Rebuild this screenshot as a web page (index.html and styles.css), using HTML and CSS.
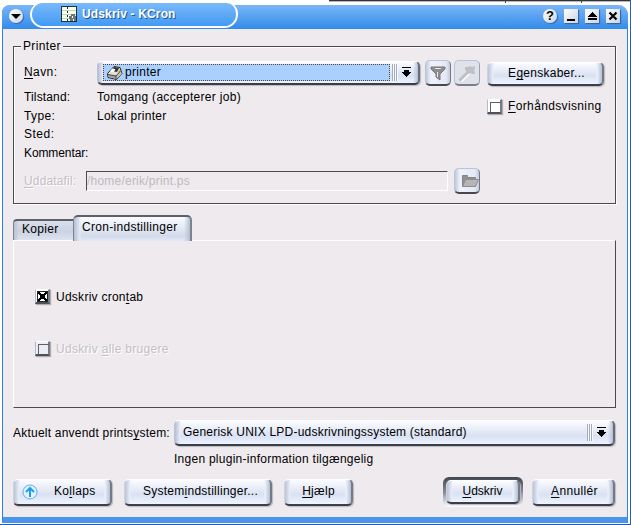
FILE: index.html
```html
<!DOCTYPE html>
<html lang="da">
<head>
<meta charset="utf-8">
<title>Udskriv - KCron</title>
<link rel="stylesheet" href="styles.css">
</head>
<body>
<div class="desktop">
  <div class="backdrop"></div>
  <div class="window">
    <header class="titlebar">
      <span class="round menu-btn"><svg width="14" height="14"><path d="M2.5 5h9v1h-1v1h-1v1h-1v1h-1v1h-1V9h-1V8h-1V7h-1V6h-1z"/></svg></span>
      <div class="caption">
        <svg class="app-icon" width="16" height="16" shape-rendering="crispEdges"><path fill="#203038" d="M0 0h16v16H0z"/><path fill="#f5ffe8" d="M1 1h14v14H1z"/><path stroke="#c4d4c4" d="M1 4.5h14M1 8.5h14M1 12.5h8"/><path stroke="#203038" stroke-dasharray="2 2" d="M6.500 1v14"/><path fill="#68737a" d="M8 10h2V8h4v2h1v5h-2v-2h-1v2H9v-2H8z"/><path fill="#fff" d="M11 10h1v2h-1z"/></svg>
        <span class="title">Udskriv - KCron</span>
      </div>
      <div class="controls">
        <span class="round help">?</span>
        <span class="sq"><svg width="14" height="14"><path d="M3 10h8v2H3z"/></svg></span>
        <span class="sq"><svg width="14" height="14" shape-rendering="crispEdges"><path d="M7 3h1v1h1v1h1v1h1v1h1v1H3V7h1V6h1V5h1V4h1zM3 9h9v2H3z"/></svg></span>
        <span class="sq"><svg width="14" height="14"><path stroke="#000" stroke-width="2.200" d="M3.500 3.500l7 7m0-7l-7 7"/></svg></span>
      </div>
    </header>
    <main class="content">
      <section class="group">
        <h2 class="legend">Printer</h2>
        <div class="row row-name">
          <label class="t-navn"><u>N</u>avn:</label>
          <div class="combo combo-printer">
            <div class="selected">
              <svg width="18" height="16"><path fill="#e2e0d8" stroke="#222" d="M1.500 8.500L8 1.500l6 1 2 6-5.500 6L2 12.500z"/><path fill="#a4a29e" d="M2 9.500l8 1.500v3l-7.500-2z"/><path fill="#c4c2b8" d="M10 11l5-5 .6 3-5.100 5z"/><path fill="#333" d="M8 2l5 1-2 4-5-1z"/><path fill="#fff" d="M6 3.500l3.500.7-2 3L4 6.500z"/><path fill="#e0c828" d="M12 6l2-1.500v2L12.500 8z"/><path stroke="#444" fill="none" d="M2 9.500l8 1.500 4.500-5M10 11v3"/></svg>
              <span class="t-printer">printer</span>
            </div>
            <span class="grip"></span>
            <svg class="arrow" width="11" height="11" shape-rendering="crispEdges"><path d="M1 0h9v1H1zM3 3h5v2h2v1H9v1H8v1H7v1H6v1H5V9H4V8H3V7H2V6H1V5h2z"/></svg>
          </div>
          <span class="tool"><svg width="18" height="18"><path fill="#8d8d8d" stroke="#777" d="M2 3h14v2l-5 5v6l-4-3v-3L2 5z"/><path fill="#e8e8e8" d="M5 4h8l-2 1H7zM8 8h1v5H8z"/></svg></span>
          <span class="tool flat"><svg width="20" height="20"><path stroke="#fff" stroke-width="3" d="M4 18L13 9"/><path stroke="#c0c0c4" stroke-width="3" d="M2.500 17.500L12 8"/><path fill="#c0c0c4" d="M8 4l3 0 2-1 2 1 3-1v3l-1 1 1 4-3 0-1-1-2 1-4-4z"/></svg></span>
        </div>
        <div class="side">
          <button class="btn egen"><span class="t-egen">E<u>g</u>enskaber...</span></button>
          <label class="check"><i class="box"></i><span class="t-forh"><u>F</u>orhåndsvisning</span></label>
        </div>
        <div class="row info r1"><span class="t-tilstand">Tilstand:</span><span class="t-tomgang">Tomgang (accepterer job)</span></div>
        <div class="row info r2"><span class="t-type">Type:</span><span class="t-lokal">Lokal printer</span></div>
        <div class="row info r3"><span class="t-sted">Sted:</span></div>
        <div class="row info r4"><span class="t-komm">Kommentar:</span></div>
        <div class="row row-file">
          <label class="disabled t-uddata"><u>U</u>ddatafil:</label>
          <div class="field"><span class="t-path">/home/erik/print.ps</span></div>
          <span class="tool folder"><svg width="18" height="15"><path fill="#929292" stroke="#858585" d="M1.500 13.500v-11h5v2h8v9z"/><path fill="#b5b5b8" stroke="#8d8d8d" d="M1.500 13.500l3-7h13l-3 7z"/></svg></span>
        </div>
      </section>
      <nav class="tabs">
        <div class="tab"><span class="t-kopier">Kopier</span></div>
        <div class="tab active"><span class="t-cron">Cron-indstillinger</span></div>
      </nav>
      <section class="panel">
        <label class="check"><i class="box"><svg width="11" height="11" shape-rendering="crispEdges"><path fill="#222" d="M0 0h11v11H0z"/><path fill="#fff" d="M1 1h9v9H1z"/><path d="M1 1h2v1h1v1h3V2h1V1h2v2H9v1H8v3h1v1h1v2H8V9H7V8H4v1H3v1H1V8h1V7h1V4H2V3H1z"/></svg></i><span class="t-crontab">Udskriv cron<u>t</u>ab</span></label>
        <label class="check"><i class="box dim"></i><span class="disabled t-alle">Udskriv <u>a</u>lle brugere</span></label>
      </section>
      <section class="system">
        <label class="t-aktuelt">Aktuelt anvendt prints<u>y</u>stem:</label>
        <div class="combo combo-system">
          <span class="t-generisk">Generisk UNIX LPD-udskrivningssystem (standard)</span>
          <span class="grip"></span>
          <svg class="arrow" width="11" height="11" shape-rendering="crispEdges"><path d="M1 0h9v1H1zM3 3h5v2h2v1H9v1H8v1H7v1H6v1H5V9H4V8H3V7H2V6H1V5h2z"/></svg>
        </div>
      </section>
      <p class="plugin"><span class="t-ingen">Ingen plugin-information tilgængelig</span></p>
      <footer class="actions">
        <button class="btn kollaps"><svg width="16" height="16"><circle cx="8" cy="8" r="7" fill="#e2f3ff" stroke="#66aee8"/><path fill="none" stroke="#1e9cf0" stroke-width="2" d="M8 13V4M4 8l4-4 4 4"/></svg><span class="t-kollaps">Ko<u>l</u>laps</span></button>
        <button class="btn sysset"><span class="t-sysset">System<u>i</u>ndstillinger...</span></button>
        <button class="btn help-btn"><span class="t-help"><u>H</u>jælp</span></button>
        <div class="default"><button class="btn"><span class="t-udskriv"><u>U</u>dskriv</span></button></div>
        <button class="btn cancel"><span class="t-cancel"><u>A</u>nnullér</span></button>
      </footer>
    </main>
  </div>
</div>
</body>
</html>
```
FILE: styles.css
```css
* { box-sizing: border-box; }
body { margin: 0; font: 12px/16px "Liberation Sans", Arial, sans-serif; color: #000; background: #fff; }
span, label { white-space: nowrap; }
svg { display: block; flex: none; }
u { text-decoration: underline; text-underline-offset: 2px; text-decoration-thickness: 1px; text-decoration-skip-ink: none; }
.desktop { position: relative; width: 631px; height: 525px; overflow: hidden; border-right: 1px solid #1f62ae; border-bottom: 1px solid #1f5fae; }
.backdrop { height: 5px; margin-left: 329px; background: linear-gradient(#444, #444) 176px 0 / 1px 3px no-repeat, linear-gradient(#444, #444) 252px 0 / 1px 3px no-repeat, linear-gradient(#333 1px, #b8b4b8 1px, #b8b4b8 2px, #fff 2px); }
.window { width: 626px; height: 518px; margin-left: 2px; background: #eeeaee; border: solid #2f7fdc; border-width: 0 1px 6px; border-bottom-color: #4a94ee; border-radius: 8px 10px 0 0; }
.titlebar { display: flex; align-items: flex-start; height: 24px; margin: 0 -1px; padding-left: 7px; border-radius: 8px 10px 0 0; background: linear-gradient(#7ab6f8, #338bea); }
.round, .sq { display: flex; align-items: center; justify-content: center; width: 14px; height: 14px; background: linear-gradient(135deg, #fff, #cbd2e2); box-shadow: 1px 1px 1px #3568a8; }
.round { border-radius: 50%; }
.menu-btn { margin-top: 4px; }
.caption { display: flex; align-items: center; width: 208px; height: 26px; margin: -3px 0 0 7px; padding-left: 29px; border: 2px solid #fff; border-top-width: 1px; border-radius: 13px 12px 14px 14px; background: linear-gradient(#7ab9fa, #429af4); color: #fff; }
.title { margin: -2px 0 0 5px; font: bold 12px/16px "Liberation Sans", sans-serif; text-shadow: 1px 1px #24558c; letter-spacing: .15px; }
.app-icon { margin-top: -2px; }
.controls { display: flex; gap: 7px; margin: 4px 0 0 305px; }
.help { font: bold 13px/14px "Liberation Sans", sans-serif; }
.content { padding: 17px 11px 0 10px; }
.group { position: relative; height: 158px; border: 1px solid #4c4a4e; box-shadow: 1px 1px #fff, inset 1px 1px #fff; padding: 0 10px; }
.legend { width: max-content; margin: -9px 0 0 -3px; padding: 0 2px; background: #eeeaee; font: 12px/16px "Liberation Sans", sans-serif; letter-spacing: .35px; }
.row { display: flex; align-items: center; }
.row-name { height: 25px; margin-top: 7px; }
.row-name label { width: 73px; margin-top: -3px; }
.combo { display: flex; align-items: center; border: 1px solid #bac4d8; border-top-color: #fff; border-bottom: 2px solid #3a3e46; border-right: 2px solid #656b78; border-radius: 5px; background: linear-gradient(90deg, #b6bfd1, #e8ecf8 5px, transparent 6px, transparent calc(100% - 5px), #b7c2d6), linear-gradient(#fbfcff, #d9e1f2 65%, #eef2ff); box-shadow: 1px 1px 1px #bbb8be; }
.combo-printer { width: 323px; height: 24px; margin-top: -1px; padding-left: 5px; }
.selected { display: flex; align-items: center; width: 287px; height: 17px; border: 1px dotted #58472c; background: #aad0ff; padding-left: 2px; }
.selected span { margin: -1px 0 0 1px; }
.grip { width: 6px; height: 17px; margin-left: 2px; background: repeating-linear-gradient(90deg, #a5adbd 0 1px, #f7f9ff 1px 2px); }
.arrow { margin-left: 3px; }
.tool { display: flex; align-items: center; justify-content: center; flex: none; width: 26px; height: 26px; margin-left: 5px; border: 1px solid #bbc4d5; border-bottom: 2px solid #45484f; border-right-color: #737987; border-radius: 5px; background: linear-gradient(90deg, #c0c9da, #eef2fc 5px, #e4e9f6 20px, #c2cadb); }
.tool.flat { margin-left: 3px; border-right-color: #9ba1ae; border-bottom-color: #777d89; background: #dfe2eb; }
.row-name .tool { margin-top: -1px; }
.side { position: absolute; left: 473px; top: 15px; }
.btn { display: flex; align-items: center; justify-content: center; margin: 0; padding: 0; font: inherit; border: 1px solid #cbd2e0; border-top-color: #fff; border-right: 2px solid #737986; border-bottom: 2px solid #3b3f47; border-radius: 5px; background: linear-gradient(90deg, #bac4d6, #e9eefa 5px, transparent 6px, transparent calc(100% - 6px), #edf1fb calc(100% - 5px), #b3bfd3), linear-gradient(#fbfcff, #d9e1f2 60%, #f0f4ff); box-shadow: 1px 1px 1px #bbb8be; }
.btn span { margin-top: -2px; }
.egen { width: 117px; height: 24px; padding-left: 3px; }
.check { display: flex; align-items: center; gap: 6px; }
.side .check { margin-top: 12px; }
.box { display: block; width: 15px; height: 15px; padding: 1px; border: solid #858990; border-width: 1px 2px 2px 1px; border-color: #fff #777b84 #4e535b #b6bac4; background: #fff; box-shadow: 1px 1px 1px #b0acb2; }
.box:empty::before { content: ""; display: block; width: 10px; height: 9px; margin: 1px; border: solid #5f6066; border-width: 1px 0 0 1px; }
.dim { background: #eceef5; }
.info { height: 19px; }
.r1 { margin-top: 1px; }
.r3 { height: 18px; }
.info span:first-child { width: 73px; }
.row-file { height: 26px; margin-top: 6px; }
.disabled { color: #c4c0c6; text-shadow: 1px 1px #fff; }
.row-file label { width: 62px; }
.field { display: flex; align-items: center; width: 362px; height: 20px; border: 1px solid; border-color: #4c4a4e #fff #fff #4c4a4e; color: #bebac0; }
.folder { margin-left: 6px; padding-left: 6px; }
.tabs { display: flex; align-items: flex-end; height: 25px; margin-top: 11px; }
.tab { position: relative; display: flex; align-items: center; width: 61px; height: 21px; padding: 0 0 4px 8px; border: 1px solid #7c838f; border-width: 2px 0 0 1px; border-top-color: #5c6069; border-radius: 4px 0 0; background: linear-gradient(90deg, #bac4d2, transparent 5px), linear-gradient(#d9deea, #cbd3e1 55%, #dce3f0); }
.tab.active { width: 119px; height: 26px; margin: 0 0 -1px -1px; border-width: 2px 2px 0 1px; border-radius: 5px 5px 0 0; background: linear-gradient(90deg, #b4c0d2, #e5eaf7 6px, transparent 7px, transparent calc(100% - 6px), #b4c0d2), linear-gradient(#fafbff, #d3dbea 80%, #e2e9f7); }
.panel { height: 168px; padding: 48px 0 0 21px; border: 1px solid; border-color: #fff #4c4a4e #4c4a4e #fff; }
.panel .check { height: 15px; }
.panel .check + .check { margin-top: 37px; }
.system { display: flex; align-items: center; height: 26px; margin-top: 12px; }
.system label { width: 161px; }
.combo-system { width: 441px; height: 26px; padding-left: 8px; }
.combo-system .t-generisk { width: 402px; margin-top: -2px; }
.plugin { margin: 5px 0 0 161px; height: 16px; }
.actions { display: flex; align-items: center; height: 30px; margin-top: 10px; }
.actions .btn { height: 27px; }
.kollaps { width: 99px; }
.actions .kollaps { justify-content: flex-start; padding-left: 8px; gap: 16px; }
.sysset { width: 148px; margin-left: 12px; padding-left: 6px; }
.help-btn { width: 69px; margin-left: 12px; padding-left: 1px; }
.default { width: 80px; height: 30px; margin-left: 90px; padding: 3px; border-radius: 6px; background: linear-gradient(#42464d, #858a94 50%, #fff); }
.default .btn { width: 100%; height: 24px; }
.cancel { width: 83px; margin-left: 9px; padding-left: 3px; }

/* Per-label tracking */
.t-navn, .t-type { letter-spacing: .4px; }
.t-sted { letter-spacing: .5px; }
.t-printer, .t-tomgang, .t-kopier, .t-cron, .t-alle, .t-kollaps { letter-spacing: .3px; }
.t-tilstand, .t-uddata { letter-spacing: .15px; }
.t-komm { letter-spacing: -.1px; }
.t-lokal, .t-egen, .t-crontab, .t-ingen, .t-sysset, .t-help { letter-spacing: .26px; }
.t-path, .t-generisk, .t-aktuelt { letter-spacing: .22px; }
.t-forh, .t-cancel { letter-spacing: .36px; }
```
